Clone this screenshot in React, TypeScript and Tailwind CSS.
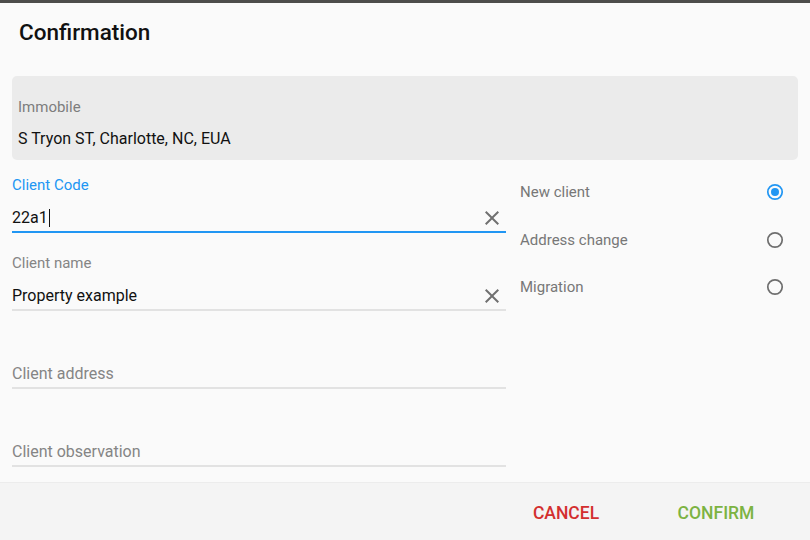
import React from "react";

const CloseIcon = () => (
  <svg width="24" height="24" viewBox="0 0 24 24" className="shrink-0">
    <path d="M19 6.41 17.59 5 12 10.59 6.41 5 5 6.41 10.59 12 5 17.59 6.41 19 12 13.41 17.59 19 19 17.59 13.41 12z" fill="#707070" />
  </svg>
);

const Radio = ({ checked }: { checked?: boolean }) => (
  <svg width="20" height="20" viewBox="0 0 20 20">
    <circle cx="10" cy="10" r="7.2" fill="none" stroke={checked ? "#2196f3" : "#6e6e6e"} strokeWidth="1.7" />
    {checked && <circle cx="10" cy="10" r="4" fill="#2196f3" />}
  </svg>
);

const Field = ({
  label,
  value,
  focused,
  cursor,
}: {
  label: string;
  value?: string;
  focused?: boolean;
  cursor?: boolean;
}) => {
  const filled = !!value;
  return (
    <div className="flex flex-col">
      <div
        className={`h-[18px] text-[15px] leading-[18px] ${focused ? "text-[#2196f3]" : "text-[#858585]"}`}
      >
        {filled ? label : ""}
      </div>
      <div
        className={`mt-[14px] h-[25px] flex items-start justify-between border-b-2 ${focused ? "border-[#2196f3]" : "border-[#e2e2e2]"}`}
      >
        {filled ? (
          <div className="flex items-center h-[20px] text-[16px] leading-[20px] text-[#111]">
            {value}
            {cursor && <span className="ml-[1px] inline-block w-px h-[18px] bg-[#111]" />}
          </div>
        ) : (
          <div className="h-[20px] text-[16px] leading-[20px] text-[#858585]">{label}</div>
        )}
        {filled && (
          <div className="-mt-[2px] mr-[2px]">
            <CloseIcon />
          </div>
        )}
      </div>
    </div>
  );
};

const RadioRow = ({ label, checked }: { label: string; checked?: boolean }) => (
  <div className="h-[47.5px] flex items-center justify-between pr-[13px]">
    <span className="text-[15px] text-[#777]">{label}</span>
    <Radio checked={checked} />
  </div>
);

export default function App() {
  return (
    <div
      className="w-[810px] h-[540px] flex flex-col bg-[#fafafa] overflow-hidden"
      style={{ fontFamily: "Roboto, 'Noto Sans', Arial, sans-serif" }}
    >
      <div className="h-[3px] bg-[#4d4d4b] shrink-0" />
      <div className="flex-1 px-[12px] flex flex-col">
        <div className="pt-[15px] pl-[7px] h-[28px] box-content text-[22.5px] leading-[28px] font-medium text-[#111]">
          Confirmation
        </div>
        <div className="mt-[30px] h-[84px] rounded-[5px] bg-[#ebebeb] px-[6px] pt-[22px]">
          <div className="text-[15px] leading-[18px] text-[#7d7d7d]">Immobile</div>
          <div className="mt-[13px] text-[16px] leading-[20px] text-[#111]">
            S Tryon ST, Charlotte, NC, EUA
          </div>
        </div>
        <div className="flex gap-[14px]">
          <div className="w-[494px] pt-[15.5px] flex flex-col gap-[21px]">
            <Field label="Client Code" value="22a1" focused cursor />
            <Field label="Client name" value="Property example" />
            <Field label="Client address" />
            <Field label="Client observation" />
          </div>
          <div className="flex-1 pt-[8.5px] flex flex-col">
            <RadioRow label="New client" checked />
            <RadioRow label="Address change" />
            <RadioRow label="Migration" />
          </div>
        </div>
      </div>
      <div className="h-[58px] shrink-0 bg-[#f4f4f4] border-t border-[#ececec] flex items-center justify-end pr-[19px] pt-[4px]">
        <button className="w-[150px] h-[40px] text-[17.5px] font-medium text-[#d32f2f]">CANCEL</button>
        <button className="w-[150px] h-[40px] text-[17.5px] font-medium text-[#7cb342]">CONFIRM</button>
      </div>
    </div>
  );
}
